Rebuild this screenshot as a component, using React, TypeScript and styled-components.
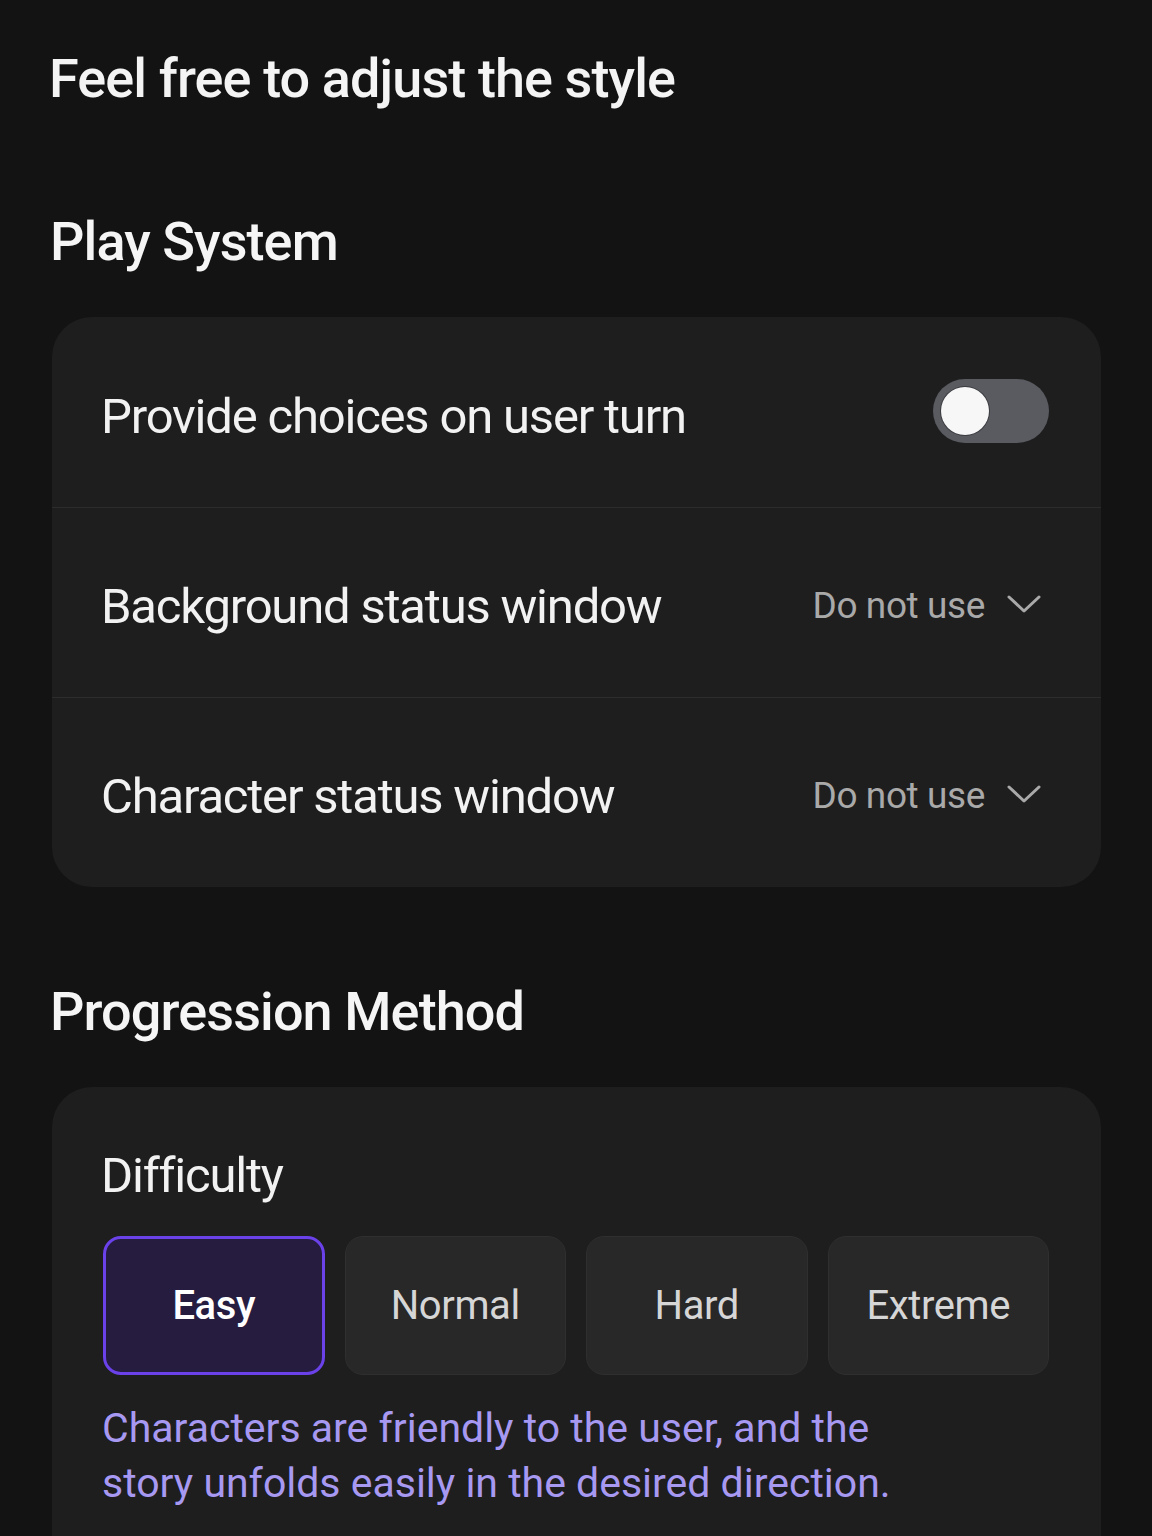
import React, { useState } from "react";
import styled, { createGlobalStyle, css } from "styled-components";

const Global = createGlobalStyle`
  html, body {
    margin: 0;
    padding: 0;
    background: #131313;
  }
  body {
    font-family: Roboto, "Liberation Sans", "Noto Sans", sans-serif;
    color: #f3f3f3;
    -webkit-font-smoothing: antialiased;
  }
  * { box-sizing: border-box; }
`;

const Page = styled.main`
  width: 1152px;
  min-height: 1536px;
  padding: 47px 51px 0 52px;
  display: flex;
  flex-direction: column;
  overflow: hidden;
`;

const Title = styled.h1`
  margin: 0 0 0 -3px;
  font-size: 54px;
  line-height: 64px;
  font-weight: 500;
  letter-spacing: -0.9px;
  color: #f4f4f4;
`;

const SectionTitle = styled.h2<{ $top: number }>`
  margin: ${(p) => p.$top}px 0 43px -2px;
  font-size: 54px;
  line-height: 64px;
  font-weight: 500;
  letter-spacing: -0.9px;
  color: #f5f5f5;
`;

const Card = styled.section<{ $padded?: boolean }>`
  background: #1e1e1e;
  border-radius: 40px;
  display: flex;
  flex-direction: column;
  overflow: hidden;
  ${(p) =>
    p.$padded &&
    css`
      padding: 60px 52px 80px 51px;
    `}
`;

const Row = styled.div`
  height: 190px;
  display: flex;
  align-items: center;
  justify-content: space-between;
  padding: 0 52px 0 49px;
  & + & {
    border-top: 1px solid #2c2c2c;
  }
`;

const Label = styled.span`
  margin-top: 9px;
  font-size: 49px;
  line-height: 58px;
  font-weight: 400;
  letter-spacing: -1.2px;
  color: #f2f2f2;
`;

const Toggle = styled.button<{ $on: boolean }>`
  width: 116px;
  height: 64px;
  border-radius: 32px;
  border: none;
  padding: 0 8px;
  margin-bottom: 2px;
  background: ${(p) => (p.$on ? "#6a40e8" : "#595b61")};
  display: flex;
  align-items: center;
  justify-content: ${(p) => (p.$on ? "flex-end" : "flex-start")};
  cursor: pointer;
`;

const Knob = styled.span`
  width: 48px;
  height: 48px;
  border-radius: 50%;
  background: #f7f7f7;
  box-shadow: 0 0 0 1px rgba(0, 0, 0, 0.35);
`;

const Select = styled.div`
  display: flex;
  align-items: center;
  gap: 22px;
  margin-top: 6px;
  padding-right: 8px;
`;

const SelectValue = styled.span`
  font-size: 37px;
  line-height: 44px;
  letter-spacing: -0.4px;
  color: #a9a9a9;
`;

const Chevron = styled.svg`
  width: 34px;
  height: 20px;
  margin-bottom: 4px;
`;

const FieldTitle = styled.div`
  margin-left: -2px;
  font-size: 49px;
  line-height: 58px;
  letter-spacing: -1.2px;
  color: #f2f2f2;
`;

const Options = styled.div`
  margin-top: 31px;
  display: grid;
  grid-template-columns: repeat(4, 1fr);
  gap: 20px;
`;

const Option = styled.button<{ $active: boolean }>`
  height: 139px;
  border-radius: 18px;
  font-family: inherit;
  font-size: 40px;
  letter-spacing: -0.4px;
  cursor: pointer;
  ${(p) =>
    p.$active
      ? css`
          background: #251c40;
          border: 3px solid #6b41ea;
          color: #ffffff;
          font-weight: 500;
        `
      : css`
          background: #282828;
          border: 1px solid #2f2f2f;
          color: #d6d6d6;
          font-weight: 400;
        `}
`;

const Description = styled.p`
  margin: 26px 0 0 -1px;
  max-width: 820px;
  font-size: 41px;
  line-height: 55px;
  color: #a799f2;
`;

const ChevronIcon = () => (
  <Chevron viewBox="0 0 34 20" fill="none">
    <path d="M2 3 L17 17 L32 3" stroke="#a9a9a9" strokeWidth="3" strokeLinecap="round" strokeLinejoin="round" />
  </Chevron>
);

const levels = ["Easy", "Normal", "Hard", "Extreme"];

export default function App() {
  const [choices, setChoices] = useState(false);
  const [level, setLevel] = useState("Easy");
  return (
    <>
      <Global />
      <Page>
        <Title>Feel free to adjust the style</Title>

        <SectionTitle $top={99}>Play System</SectionTitle>
        <Card>
          <Row>
            <Label>Provide choices on user turn</Label>
            <Toggle $on={choices} onClick={() => setChoices(!choices)} aria-label="toggle">
              <Knob />
            </Toggle>
          </Row>
          <Row>
            <Label>Background status window</Label>
            <Select>
              <SelectValue>Do not use</SelectValue>
              <ChevronIcon />
            </Select>
          </Row>
          <Row>
            <Label>Character status window</Label>
            <Select>
              <SelectValue>Do not use</SelectValue>
              <ChevronIcon />
            </Select>
          </Row>
        </Card>

        <SectionTitle $top={93}>Progression Method</SectionTitle>
        <Card $padded>
          <FieldTitle>Difficulty</FieldTitle>
          <Options>
            {levels.map((l) => (
              <Option key={l} $active={l === level} onClick={() => setLevel(l)}>
                {l}
              </Option>
            ))}
          </Options>
          <Description>
            Characters are friendly to the user, and the story unfolds easily in the desired direction.
          </Description>
        </Card>
      </Page>
    </>
  );
}
